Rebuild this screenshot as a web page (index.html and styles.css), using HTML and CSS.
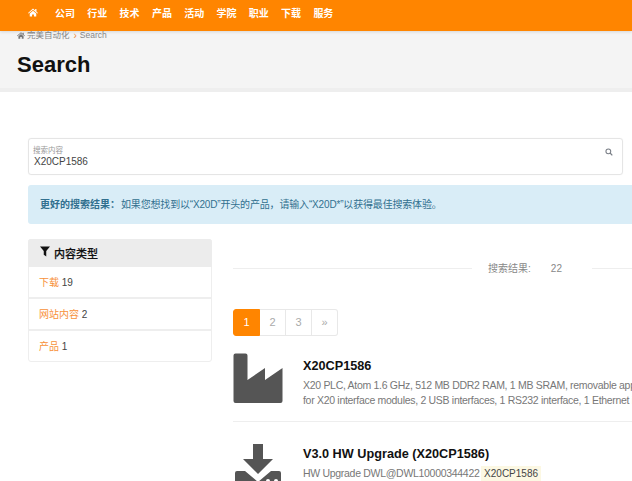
FILE: index.html
```html
<!DOCTYPE html>
<html lang="zh">
<head>
<meta charset="utf-8">
<title>Search</title>
<link rel="stylesheet" href="styles.css">
</head>
<body>
<header class="topbar">
  <nav class="nav">
    <svg class="home" viewBox="0 0 16 14"><path d="M8 0.5 L11.5 3.6 V1.5 H13.5 V5.3 L16 7.6 L15 8.7 L8 2.6 L1 8.7 L0 7.6 Z M2.8 8.6 L8 4 L13.2 8.6 V13.5 H9.5 V10 H6.5 V13.5 H2.8 Z"/></svg>
    <a>公司</a><a>行业</a><a>技术</a><a>产品</a><a>活动</a><a>学院</a><a>职业</a><a>下载</a><a>服务</a>
  </nav>
</header>
<section class="hero">
  <div class="crumb">
    <svg class="crumb-home" viewBox="0 0 16 14"><path d="M8 0.5 L11.5 3.6 V1.5 H13.5 V5.3 L16 7.6 L15 8.7 L8 2.6 L1 8.7 L0 7.6 Z M2.8 8.6 L8 4 L13.2 8.6 V13.5 H9.5 V10 H6.5 V13.5 H2.8 Z"/></svg>
    <span>完美自动化</span><span class="sep">›</span><span>Search</span>
  </div>
  <h1>Search</h1>
</section>
<main class="page">
  <div class="searchbox">
    <div class="search-text">
      <div class="search-label">搜索内容</div>
      <div class="search-value">X20CP1586</div>
    </div>
    <svg class="search-icon" viewBox="0 0 12 12"><circle cx="5" cy="5" r="3.6" fill="none" stroke="#7a7f87" stroke-width="1.6"/><path d="M7.6 7.6 L11 11" stroke="#7a7f87" stroke-width="1.9"/></svg>
  </div>
  <div class="alert"><strong>更好的搜索结果：</strong>如果您想找到以“X20D”开头的产品，请输入“X20D*”以获得最佳搜索体验。</div>
  <div class="columns">
    <aside class="facets">
      <div class="facet-head">
        <svg class="funnel" viewBox="0 0 12 12"><path d="M0 0 H12 L7.5 5.5 V12 L4.5 9.8 V5.5 Z"/></svg>
        <span>内容类型</span>
      </div>
      <div class="facet"><a>下载</a> 19</div>
      <div class="facet"><a>网站内容</a> 2</div>
      <div class="facet"><a>产品</a> 1</div>
    </aside>
    <section class="results">
      <div class="divider"><span class="line"></span><span class="count"><span>搜索结果:</span><span>22</span></span><span class="line"></span></div>
      <div class="pager"><a class="on">1</a><a>2</a><a>3</a><a>»</a></div>
      <article class="result first">
        <svg class="ricon" viewBox="0 0 50 50"><path d="M0.5 2.5 Q0.5 0.5 2.5 0.5 H12.5 Q14.5 0.5 14.5 2.5 V27 L32 15 V27 L49.5 15 V48 Q49.5 50 47.5 50 H2.5 Q0.5 50 0.5 48 Z" fill="#555"/></svg>
        <div class="rbody">
          <h3>X20CP1586</h3>
          <p>X20 PLC, Atom 1.6 GHz, 512 MB DDR2 RAM, 1 MB SRAM, removable application memory, 2 slots<br>for X20 interface modules, 2 USB interfaces, 1 RS232 interface, 1 Ethernet interface</p>
        </div>
      </article>
      <article class="result second">
        <svg class="ricon" viewBox="0 0 50 50"><path d="M20 0 H30 V15 H40 L25 30 L10 15 H20 Z" fill="#555"/><path d="M4 27 H12 L25 38 L38 27 H46 Q48 27 48 29 V50 H2 V29 Q2 27 4 27 Z" fill="#555"/><circle cx="35" cy="37" r="2" fill="#fff"/><circle cx="43" cy="37" r="2" fill="#fff"/></svg>
        <div class="rbody">
          <h3>V3.0 HW Upgrade (X20CP1586)</h3>
          <p>HW Upgrade DWL@DWL10000344422 <mark>X20CP1586</mark></p>
        </div>
      </article>
    </section>
  </div>
</main>
</body>
</html>
```
FILE: styles.css
```css
* { box-sizing: border-box; }
html, body { margin: 0; height: 481px; overflow: hidden; }
body { font-family: "Liberation Sans", "Noto Sans CJK SC", sans-serif; font-size: 10px; color: #555; background: #fff; }
.topbar { height: 31px; background: #ff8500; box-shadow: 0 1px 3px rgba(0,0,0,.12); position: relative; }
.nav { display: flex; align-items: center; height: 25px; padding-left: 28px; color: #fff; font-weight: bold; }
.home { width: 10px; height: 9px; fill: #fff; margin-right: 17px; }
.nav a { width: 32.3px; font-size: 10px; }
.hero { height: 61px; background: #f4f4f4; border-bottom: 4px solid #eee; padding: 0 17px; }
.crumb { display: flex; align-items: center; height: 9px; font-size: 8.5px; color: #888; line-height: 9px; }
.crumb-home { width: 8px; height: 7px; fill: #777; margin-right: 2px; }
.sep { color: #f08a3c; margin: 0 3px 0 4px; font-size: 10px; }
h1 { margin: 12px 0 0; font-size: 22px; line-height: 26px; font-weight: bold; color: #111; }
.page { padding: 46px 0 0 28px; }
.searchbox { width: 595px; height: 37px; border: 1px solid #e5e5e5; border-radius: 3px; display: flex; justify-content: space-between; padding: 8px 9px 0 4px; box-shadow: 0 0 1px rgba(0,0,0,.08); }
.search-label { font-size: 7.5px; line-height: 8px; color: #999; }
.search-value { font-size: 10px; line-height: 13px; color: #444; padding-left: 1px; }
.search-icon { width: 8px; height: 8px; margin-top: 1px; }
.alert { margin-top: 10px; margin-right: -20px; height: 39px; background: #d9edf7; border-radius: 3px 0 0 3px; color: #31708f; padding: 0 12px; line-height: 39px; font-size: 10px; letter-spacing: -.17px; white-space: nowrap; }
.alert strong { margin-right: 1px; letter-spacing: 0; }
.columns { display: flex; margin-top: 15px; }
.facets { width: 184px; height: 123px; border: 1px solid #eee; border-radius: 3px; flex: none; }
.facet-head { height: 28px; margin: -1px -1px 0; background: #ececec; border-radius: 3px 3px 0 0; display: flex; align-items: center; padding-left: 12px; gap: 4px; color: #111; font-size: 11px; font-weight: 500; -webkit-text-stroke: .2px #111; }
.funnel { width: 10px; height: 11px; fill: #111; margin-bottom: 3px; }
.facet { height: 32px; line-height: 32px; border-bottom: 2px solid #eee; padding-left: 10px; font-size: 10px; color: #444; }
.facet:last-child { border-bottom: 0; }
.facet a { color: #f7913a; }
.results { margin-left: 21px; width: 420px; flex: none; }
.divider { display: flex; align-items: center; height: 19px; margin-top: 20px; width: 420px; }
.line { height: 1px; background: #eee; flex: 1; }
.line:first-child { flex: none; width: 239px; }
.count { width: 120px; display: flex; align-items: baseline; justify-content: center; gap: 20px; color: #888; font-size: 10px; line-height: 14px; padding-right: 14px; }
.pager { display: flex; margin-top: 31px; height: 27px; }
.pager a { width: 26px; height: 27px; line-height: 25px; text-align: center; border: 1px solid #e8e8e8; border-left-width: 0; color: #aaa; font-size: 11px; }
.pager a:last-child { border-radius: 0 3px 3px 0; }
.pager a.on { width: 27px; background: #ff8500; border-color: #ff8500; color: #fff; border-radius: 3px 0 0 3px; border-width: 1px; }
.result { display: flex; gap: 20px; width: 420px; white-space: nowrap; }
.ricon { width: 50px; height: 50px; flex: none; }
.first { margin-top: 17px; height: 69px; border-bottom: 1px solid #eee; }
.second { margin-top: 22px; }
h3 { margin: 0; font-size: 12.7px; line-height: 18px; color: #111; font-weight: bold; padding-top: 1px; }
.first h3 { margin-top: 3px; }
.rbody p { margin: 0; font-size: 10.5px; letter-spacing: -.3px; line-height: 14.5px; color: #777; padding-top: 3px; }
mark { background: #fcf8e3; color: #444; padding: 2px 3px; font-size: 10px; letter-spacing: 0; margin-left: -1px; }
```
